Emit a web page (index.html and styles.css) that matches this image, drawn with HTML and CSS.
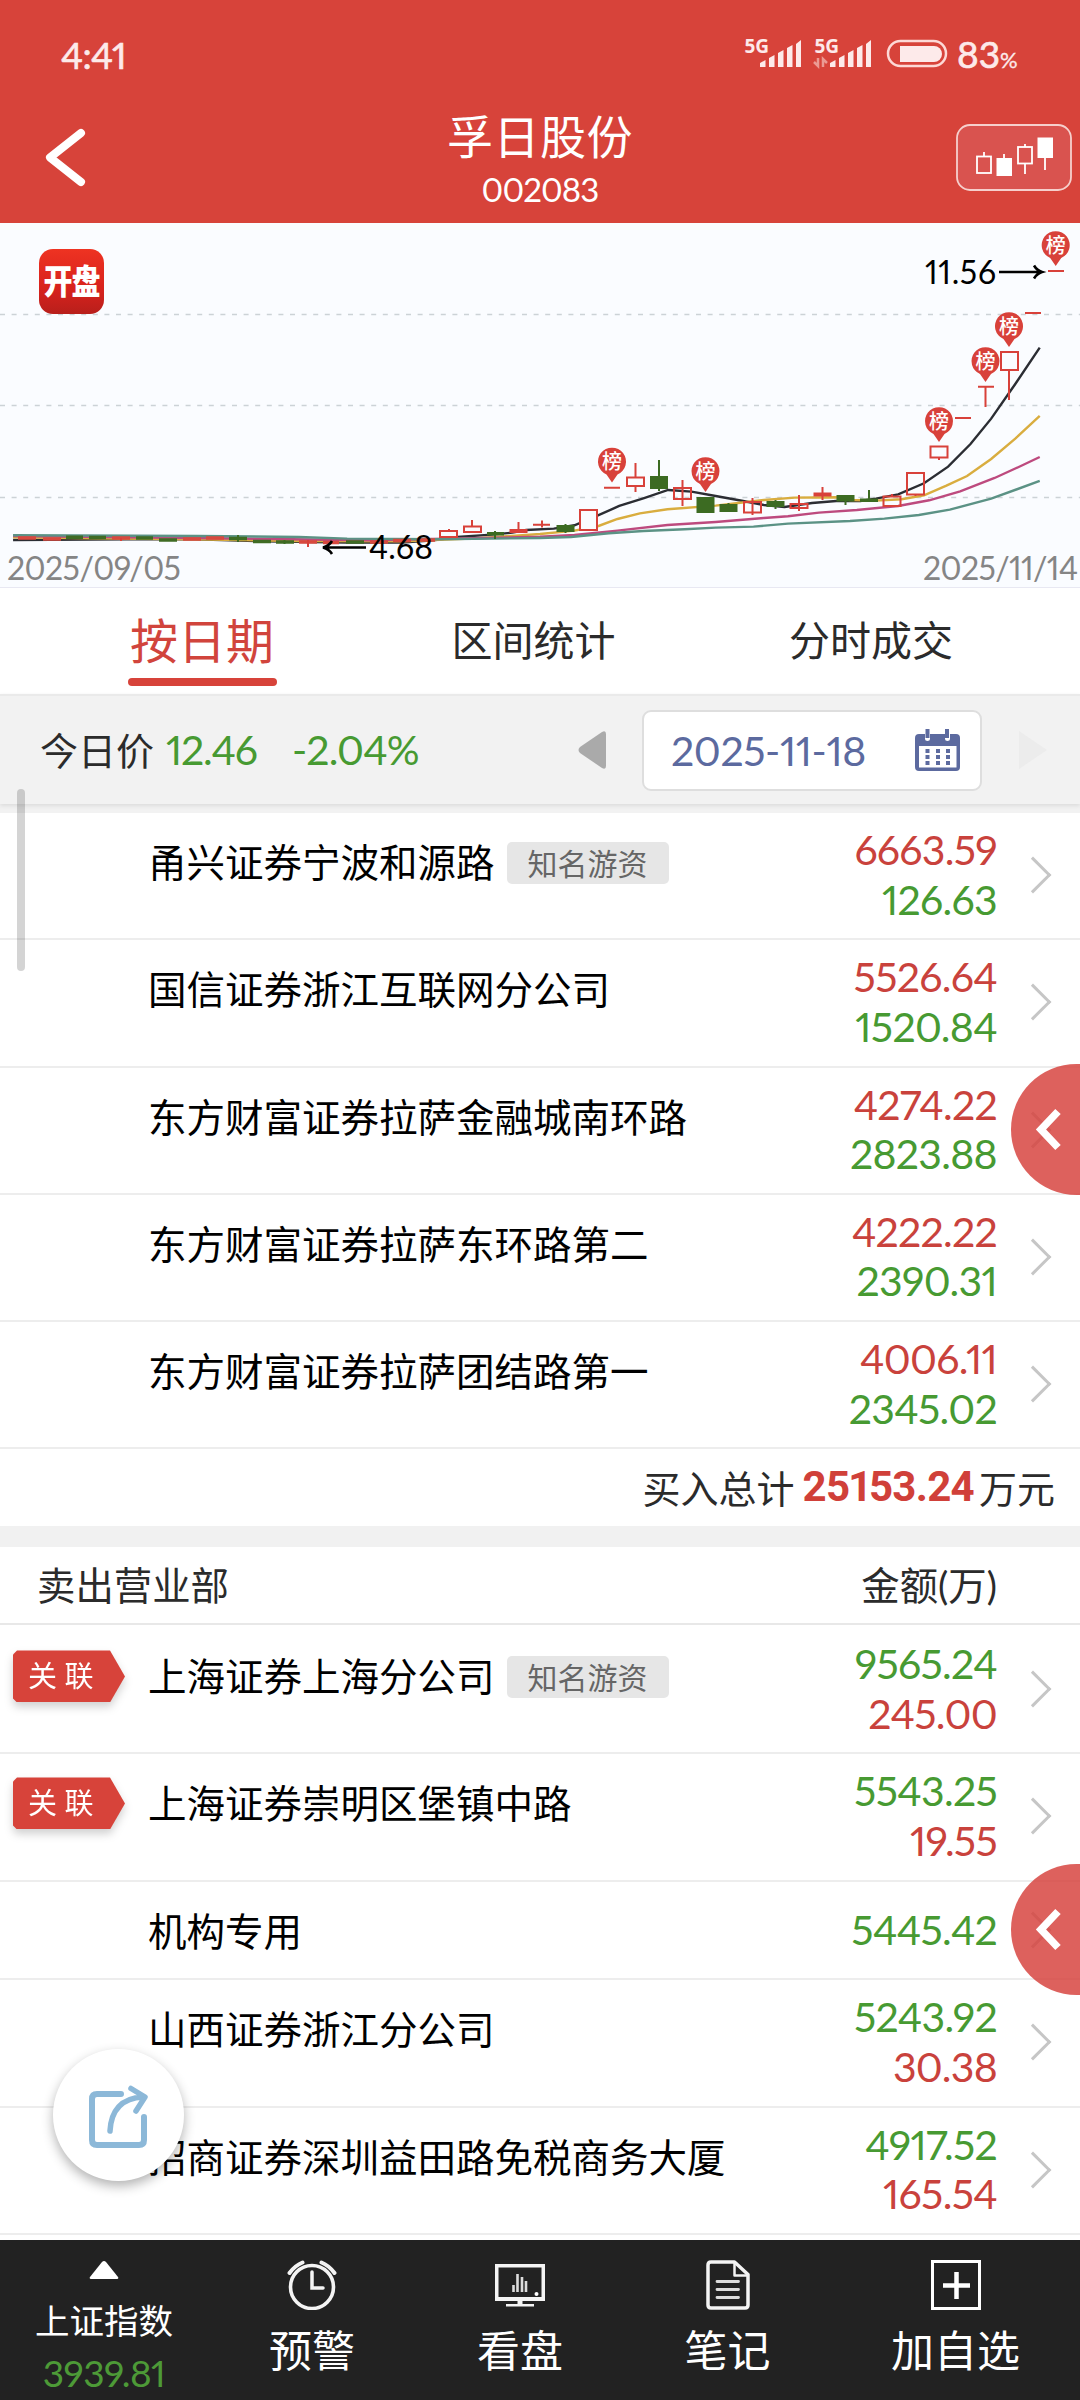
FILE: index.html
```html
<!DOCTYPE html>
<html lang="zh-CN">
<head>
<meta charset="utf-8">
<title>孚日股份 002083</title>
<link rel="stylesheet" href="styles.css">
</head>
<body>
<div class="app">
  <header class="top">
    <div class="status">
      <span class="clock">4:41</span>
      <svg class="signals" width="204" height="42" viewBox="744 32 204 42">
        <g fill="#fdeaea">
          <text class="net" x="744.5" y="52.5">5G</text>
          <path d="M760 67v-4l5.500-3v7zM769 67v-9l5.500-3v12zM778 67v-14l5.500-3v17zM787 67v-19l5.500-3v22zM796 67V44l5-4v27z"/>
          <text class="net" x="814.500" y="52.500">5G</text>
          <path d="M830 67v-4l5.500-3v7zM839 67v-9l5.500-3v12zM848 67v-14l5.500-3v17zM857 67v-19l5.500-3v22zM866 67V44l5-4v27z"/>
          <path d="M900 46h34a8 8 0 0 1 0 16h-34z"/>
        </g>
        <path d="M818 58v8l-4-4M823 67v-8l4 4" fill="none" stroke="#eb9a93" stroke-width="2.500"/>
        <rect x="888" y="41" width="58" height="25" rx="12.500" fill="none" stroke="#fdd9d6" stroke-width="2.500"/>
      </svg>
      <span class="power">83<small>%</small></span>
    </div>
    <div class="titlebar">
      <svg class="back" width="44" height="64" viewBox="44 125 44 64"><path d="M81 133 50 157.500 81 182" fill="none" stroke="#fff" stroke-width="8" stroke-linecap="round" stroke-linejoin="round"/></svg>
      <div class="title"><h1>孚日股份</h1><p>002083</p></div>
      <svg class="kbtn" width="116" height="68" viewBox="956 124 116 68">
        <rect x="957" y="125" width="114" height="65" rx="13" fill="#d9534f" stroke="#f6cfcc" stroke-width="1.800"/>
        <g fill="none" stroke="#fff" stroke-width="1.800">
          <rect x="977" y="156.500" width="14" height="16.500"/><path d="M984 152v4M1004 154v5M1025 144v3M1025 164v10M1045 157v13"/>
          <rect x="1018" y="147" width="14" height="16.500"/>
        </g>
        <path d="M996.500 158H1012v18h-15.500zM1037.500 137.500H1053V158h-15.500z" fill="#fff"/>
      </svg>
    </div>
  </header>

  <section class="chart">
    <svg width="1080" height="364" viewBox="0 223 1080 364">
      <defs>
        <linearGradient id="logo" x1="0" y1="0" x2="0" y2="1"><stop offset="0" stop-color="#ee3322"/><stop offset=".6" stop-color="#d8221d"/><stop offset="1" stop-color="#b81f1b"/></linearGradient>
        <g id="pin"><path d="M0 20.500 -5.500 12.500A14 14 0 1 1 5.500 12.500Z" fill="#d8413a"/><text class="pin-label" x="0" y="7">榜</text></g>
      </defs>
      <path d="M0 314.500H1080M0 405.500H1080M0 497.500H1080" stroke="#ccd2d6" stroke-width="1.300" stroke-dasharray="5 6.600"/>
      <rect x="39" y="249" width="65" height="65" rx="14" fill="url(#logo)"/>
      <text class="logo-label" transform="translate(71.500 294) scale(1 1.180)">开盘</text>
      <g class="averages" transform="translate(540 220) scale(.3444 .3333)">
        <polyline stroke="#2b2d33" points="-1530,960 -1200,958 -1000,958 -800,964 -560,968 -400,968 -310,961 -240,951 -140,944 -80,938 -40,930 40,926 100,916 165,888 230,858 300,835 372,810 440,815 510,828 590,843 650,855 710,861 790,849 860,843 930,843 975,836 1040,823 1115,790 1185,740 1250,672 1310,596 1380,492 1451,383"/>
        <polyline stroke="#d9ad3f" points="-1530,952 -1300,955 -1000,958 -700,963 -400,964 -200,956 0,942 100,932 170,918 225,897 290,880 370,868 510,857 600,846 650,840 740,833 860,832 900,840 975,842 1050,838 1115,826 1180,797 1240,768 1310,717 1380,656 1451,588"/>
        <polyline stroke="#bd4a7e" points="-1530,948 -1000,954 -500,961 -200,955 0,950 100,945 225,932 370,915 510,906 650,894 720,889 810,878 920,870 1040,858 1130,841 1220,814 1320,774 1390,741 1451,711"/>
        <polyline stroke="#5b9285" points="-1530,946 -1000,948 -700,951 -560,956 -300,958 0,954 90,951 200,940 300,933 420,928 510,923 620,920 720,911 900,903 1000,896 1100,885 1190,869 1310,836 1451,783"/>
      </g>
      <g class="bars-left" stroke-width="3.500">
        <path stroke="#d8493f" d="M18 538h18M43 539h18M112 538h18M183 539h18M206 538h18M299 542h18M323 542.500h16M370 542h18M393 540.500h18M417 540h18"/>
        <path stroke="#3f6b24" d="M66 537.300h17M89 537.500h17M136 538h17M159 540h18M229 538.500h18M253 541.500h18M276 542h18M346 542h18"/>
      </g>
      <g stroke="#d8413a" stroke-width="2" fill="#fafcff">
        <path d="M121 538v3M308 540v7M449 529v3M472 520v6M518.500 522v8M542 520.500v7M533 524.700h17M635.500 463v29M682.500 480v26M752.500 498v17M799 495v16M822.500 487v13M892 494v3M915.500 494v2M939 457v3M985.500 387v20M1009 370v30M604 487.700h16M955 418h16M978 386.700h16M1025 313h16M1048 271h16"/>
        <rect x="440" y="531" width="17" height="6"/><rect x="464" y="526.500" width="17" height="5.500"/>
        <rect x="580" y="510" width="17" height="20"/><rect x="627" y="477.500" width="17" height="8.500"/>
        <path fill="none" d="M674 488h17v11h-17zM744 502h17v10.500h-17zM790.500 504h17v4h-17zM883.500 496.500h17v9.500h-17zM907 473h17v21.500h-17z"/>
        <rect x="930.500" y="446.500" width="17" height="11"/><rect x="1001" y="352" width="17" height="18"/>
        <path fill="#d8413a" d="M510.500 530h16v2h-16zM814.500 493.500h16v2h-16z"/>
      </g>
      <g fill="#3c6b22" stroke="#3c6b22" stroke-width="2">
        <path d="M495 531v8M238 535v7M284.500 540v4M565.500 524v9M659 460v31M728.500 503v9M775.500 500v9M845.500 495v10M869 490v12" />
        <path d="M488 533h15v1.500h-15zM557.500 526h16v5h-16zM651 477h16v11h-16zM697.500 498h16v14h-16zM720.500 505h16v6h-16zM767.500 502h16v4h-16zM837.500 496h16v4.500h-16zM861 499.500h16v1.500h-16z"/>
      </g>
      <g fill="none" stroke="#000" stroke-width="2.600"><path d="M366 547.500H326M332 541q-3 5-9 6.500 6 1.500 9 6.500M999 272h40M1034 265.500q3 5 8 6.500-5 1.500-8 6.500"/></g>
      <text class="price" x="369" y="559" textLength="64">4.68</text>
      <text class="price" x="925" y="284" textLength="71">11.56</text>
      <text class="day" x="7" y="580" textLength="174">2025/09/05</text>
      <text class="day" x="923" y="580" textLength="155">2025/11/14</text>
      <use href="#pin" x="612" y="462"/><use href="#pin" x="705.500" y="471.500"/><use href="#pin" x="939" y="421.500"/><use href="#pin" x="985.500" y="361.500"/><use href="#pin" x="1009" y="326.500"/><use href="#pin" x="1055.700" y="245.500"/>
    </svg>
  </section>

  <nav class="tabs">
    <span class="tab active">按日期</span><span class="tab">区间统计</span><span class="tab">分时成交</span>
  </nav>

  <section class="daybar">
    <span class="today">今日价</span><span class="now">12.46</span><span class="change">-2.04%</span>
    <svg class="prev" width="28" height="38"><path d="M28 3v32q0 4-4 2L2 22q-3-3 0-6L24 1q4-2 4 2z" fill="#aaa"/></svg>
    <div class="date"><span>2025-11-18</span>
      <svg width="46" height="43" viewBox="0 0 46 43"><path d="M4 5h6v5q0 2 2.500 2t2.500-2V5h15v5q0 2 2.500 2t2.500-2V5h6q4 0 4 4v29q0 4-4 4H4q-4 0-4-4V9q0-4 4-4zM4 17v21.500h37.500V17z" fill="#5c6a9f" fill-rule="evenodd"/><path d="M10.500 0h4v9h-4zM30 0h4v9h-4zM10.500 20h4v4h-4zM21 20h4v4h-4zM31 20h4v4h-4zM10.500 26h4v4h-4zM21 26h4v4h-4zM31 26h4v4h-4zM10.500 32h4v4h-4zM21 32h4v4h-4zM31 32h4v4h-4z" fill="#5c6a9f"/></svg>
    </div>
    <svg class="next" width="28" height="38"><path d="M0 0v38L28 19z" fill="#ececec"/></svg>
  </section>

  <main>
    <ul class="rows buy">
      <li><span class="name">甬兴证券宁波和源路</span><span class="tag">知名游资</span><span class="vals"><b class="r">6663.59</b><b class="g">126.63</b></span><i class="go"></i></li>
      <li><span class="name">国信证券浙江互联网分公司</span><span class="vals"><b class="r">5526.64</b><b class="g">1520.84</b></span><i class="go"></i></li>
      <li><span class="name">东方财富证券拉萨金融城南环路</span><span class="vals"><b class="r">4274.22</b><b class="g">2823.88</b></span><i class="go"></i></li>
      <li><span class="name">东方财富证券拉萨东环路第二</span><span class="vals"><b class="r">4222.22</b><b class="g">2390.31</b></span><i class="go"></i></li>
      <li><span class="name">东方财富证券拉萨团结路第一</span><span class="vals"><b class="r">4006.11</b><b class="g">2345.02</b></span><i class="go"></i></li>
    </ul>
    <div class="total">买入总计<strong>25153.24</strong>万元</div>
    <div class="sellhead"><span>卖出营业部</span><span>金额(万)</span></div>
    <ul class="rows sell">
      <li><span class="link">关 联</span><span class="name">上海证券上海分公司</span><span class="tag">知名游资</span><span class="vals"><b class="g">9565.24</b><b class="r">245.00</b></span><i class="go"></i></li>
      <li><span class="link">关 联</span><span class="name">上海证券崇明区堡镇中路</span><span class="vals"><b class="g">5543.25</b><b class="r">19.55</b></span><i class="go"></i></li>
      <li class="single"><span class="name">机构专用</span><span class="vals"><b class="g">5445.42</b></span><i class="go"></i></li>
      <li><span class="name">山西证券浙江分公司</span><span class="vals"><b class="g">5243.92</b><b class="r">30.38</b></span><i class="go"></i></li>
      <li><span class="name">招商证券深圳益田路免税商务大厦</span><span class="vals"><b class="g">4917.52</b><b class="r">165.54</b></span><i class="go"></i></li>
    </ul>
  </main>

  <footer class="dock">
    <div class="index"><svg width="30" height="18"><path d="M13 1q2-2 4 0l12 15q1 2-1 2H2q-2 0-1-2z" fill="#fff"/></svg><span>上证指数</span><em>3939.81</em></div>
    <div class="item"><svg width="50" height="50" viewBox="0 0 50 50" fill="none" stroke="#f4f4f4" stroke-width="3"><circle cx="25" cy="27" r="21.500" stroke-width="3.600"/><path d="M25 12v16h11" stroke-width="3.500" stroke-linecap="round"/><path d="M2.500 13Q8 5.500 15.500 2.500M34.500 2.500Q42 5.500 47.500 13" stroke-width="4" stroke-linecap="round"/></svg><span>预警</span></div>
    <div class="item"><svg width="50" height="50" viewBox="0 0 50 50"><path d="M0 4h50v37H0zM3.500 7.500v29.500h43V7.500z" fill="#f4f4f4" fill-rule="evenodd"/><path d="M22.500 41h5v3H39v2.500H11V44h11.500z" fill="#f4f4f4"/><path d="M18.500 25v7M22.500 14v18M27 17v15M31 21v11" stroke="#ddd" stroke-width="2.600"/><circle cx="41.500" cy="34" r="2" fill="#fff"/></svg><span>看盘</span></div>
    <div class="item"><svg width="44" height="50" viewBox="0 0 44 50" fill="none" stroke="#f4f4f4" stroke-width="3.500" stroke-linejoin="round"><path d="M5 2h23.500L42 14.500V45q0 3-3 3H5q-3 0-3-3V5q0-3 3-3z"/><path d="M28.500 2v13.500H42" stroke-width="2.500"/><path d="M11 21.500h21.500M11 29.500h21.500M11 37.500h21.500" stroke="#ddd" stroke-width="2.800" stroke-linecap="round"/></svg><span>笔记</span></div>
    <div class="item"><svg width="50" height="50" viewBox="0 0 50 50" fill="none" stroke="#fff"><rect x="1.500" y="1.500" width="47" height="47" stroke-width="3"/><path d="M12 25.500h27M25.500 12v27" stroke-width="4.500"/></svg><span>加自选</span></div>
  </footer>

  <i class="scroll"></i>
  <div class="drawer one"><svg width="30" height="44"><path d="M24 3.500 7 21.500 24 39.500" fill="none" stroke="#fff" stroke-width="7.500"/></svg></div>
  <div class="drawer two"><svg width="30" height="44"><path d="M24 3.500 7 21.500 24 39.500" fill="none" stroke="#fff" stroke-width="7.500"/></svg></div>
  <div class="share"><svg width="60" height="64" viewBox="0 0 60 64" fill="none" stroke="#8cb8d8" stroke-width="6" stroke-linecap="round" stroke-linejoin="round"><path d="M32 9H8q-5 0-5 5v41q0 5 5 5h42q5 0 5-5V32"/><path d="M21 46C22 26 32 13 54 12M42 3.500 56 12 47 26" stroke-width="5.500"/></svg></div>
</div>
</body>
</html>
```
FILE: styles.css
```css
* { box-sizing: border-box; }
body, h1, p, ul { margin: 0; padding: 0; }
ul { list-style: none; }
body {
  font-family: Lato, "Noto Sans CJK SC", sans-serif;
  font-variant-numeric: proportional-nums;
  background: #fff;
  color: #2b2b2b;
}
i, em { font-style: normal; }
svg { display: block; flex: none; }
.app { position: relative; width: 1080px; height: 2400px; overflow: hidden; }

/* header */
.top { height: 223px; background: #d7433a; color: #fff; }
.status { display: flex; align-items: center; height: 108px; padding-left: 61px; color: #fdeaea; }
.clock { width: 683px; font-size: 37px; letter-spacing: -.7px; -webkit-text-stroke: .6px #fdeaea; }
.signals { margin-top: -2px; }
.net { font: 700 19px "Open Sans", sans-serif; }
.power { margin-left: 9px; margin-top: -2px; font-size: 37px; white-space: nowrap; -webkit-text-stroke: .7px #fdeaea; }
.power small { font-size: 22px; -webkit-text-stroke: .3px #fdeaea; }
.titlebar { display: flex; height: 115px; }
.back { margin: 17px 0 0 44px; }
.title { width: 868px; padding-left: 36px; text-align: center; }
.title h1 { font-size: 46px; font-weight: 400; line-height: 60px; letter-spacing: .5px; margin-top: -1px; white-space: nowrap; }
.title p { font-size: 33px; line-height: 44px; letter-spacing: -.9px; }
.kbtn { margin-top: 16px; }

/* chart */
.chart { height: 365px; background: #fafcff; border-bottom: 1px solid #e8e8f2; }
.averages { fill: none; stroke-width: 2.4; }
.averages polyline { vector-effect: non-scaling-stroke; }
.pin-label { font: 500 20px "Noto Sans CJK SC", sans-serif; fill: #fff; text-anchor: middle; }
.logo-label { font: 900 29px "Noto Sans CJK SC", sans-serif; fill: #fff; text-anchor: middle; letter-spacing: -1px; }
.price { font-size: 32px; fill: #000; }
.day { font-size: 32px; fill: #858585; }

/* tabs */
.tabs { display: grid; grid-template-columns: 332px 331px 344px; padding-left: 36px; height: 106px; justify-items: center; }
.tab { font-size: 41px; line-height: 106px; }
.tab.active { position: relative; width: 149px; font-size: 48px; text-align: center; color: #d1443c; white-space: nowrap; }
.tab.active::after { content: ""; position: absolute; left: 0; right: 0; top: 90px; height: 8px; border-radius: 4px; background: #d7433a; }

/* day selector */
.daybar {
  position: relative; z-index: 1;
  display: flex; align-items: center; height: 110px; padding: 0 0 0 40px;
  background: #f2f2f2; border-top: 2px solid #eaeaea; font-size: 41px;
  box-shadow: 0 2px 4px #dcdcdc;
}
.today { width: 126px; font-size: 38px; margin-top: -3px; }
.now { width: 126px; color: #479a32; letter-spacing: -1.2px; margin-top: -2px; }
.change { width: 286px; color: #479a32; letter-spacing: -.9px; margin-top: -2px; }
.date {
  display: flex; align-items: center; justify-content: space-between;
  width: 340px; height: 81px; margin: 0 37px 0 36px; padding: 0 19px 0 27px;
  background: #fff; border: 2px solid #dedede; border-radius: 9px;
  color: #5c6a9f; letter-spacing: -.4px; white-space: nowrap;
}

/* broker lists */
main { border-top: 9px solid #f2f2f2; }
.rows li { display: flex; height: 127.300px; padding: 12px 0 0 148px; border-bottom: 2px solid #ededed; color: #000; }
.name { font-size: 38.500px; line-height: 75px; white-space: nowrap; }
.tag { width: 162px; height: 42px; margin: 17px 0 0 12px; border-radius: 5px; background: #e6e6e6; color: #666; font-size: 30px; line-height: 42px; text-align: center; }
.vals { margin-left: auto; width: 180px; }
.vals b { display: block; font-size: 41px; font-weight: 400; line-height: 49.500px; text-align: right; letter-spacing: -.7px; }
.r { color: #c9423c; }
.g { color: #479a32; }
.go { width: 26px; height: 26px; margin: 37px 34px 0 23px; border: solid #c6c6c6; border-width: 3px 3px 0 0; transform: rotate(45deg); }
.total { display: flex; align-items: center; justify-content: flex-end; height: 77px; padding: 0 25px 3px 0; font-size: 38px; }
.total strong { margin: 0 5px 0 8px; font-family: Roboto, sans-serif; font-size: 42px; color: #d04039; letter-spacing: -.7px; }
.sellhead { display: flex; align-items: center; justify-content: space-between; height: 99px; padding: 0 83px 4px 37px; border-top: 21px solid #f1f1f1; border-bottom: 2px solid #e8e8e8; font-size: 38.400px; }
.sell li:first-child { height: 129px; padding-top: 14px; }
.sell .single { height: 98.500px; }
.single .vals b { line-height: 71px; }
.single .go { margin-top: 23px; }
.link {
  position: relative; z-index: 0;
  width: 112px; height: 52px; margin: 11px 23px 0 -135px; padding-left: 15px;
  color: #fff; font-size: 29px; line-height: 51px; white-space: nowrap;
  filter: drop-shadow(0 5px 4px rgba(0,0,0,.18));
}
.link::before {
  content: ""; position: absolute; z-index: -1; inset: 0; background: #d7433a;
  clip-path: polygon(4px 0, 97px 0, 112px 50%, 97px 100%, 4px 100%, 0 48px, 0 4px);
}

/* bottom dock */
.dock { position: absolute; left: 0; top: 2240px; width: 1080px; height: 160px; display: grid; grid-template-columns: 208px 208px 208px 207px 249px; background: #222; color: #fff; }
.index, .item { display: flex; flex-direction: column; align-items: center; }
.index { padding-top: 21px; }
.index span { font-size: 34.500px; line-height: 50px; margin-top: 17px; }
.index em { font-size: 37px; line-height: 44px; margin-top: 5px; color: #4d9a37; letter-spacing: -.5px; }
.item { padding-top: 20px; }
.item span { font-size: 43px; line-height: 60px; margin-top: 11px; }

/* overlays */
.scroll { position: absolute; z-index: 2; left: 17px; top: 789px; width: 8px; height: 182px; border-radius: 4px; background: rgba(0,0,0,.17); }
.drawer { position: absolute; left: 1011px; width: 131px; height: 131px; border-radius: 50%; background: rgba(215,67,62,.84); padding: 44px 0 0 23px; }
.one { top: 1064px; }
.two { top: 1864px; }
.share { position: absolute; left: 53px; top: 2049px; width: 131px; height: 132px; border-radius: 50%; background: #fff; padding: 36px 0 0 36px; box-shadow: 0 5px 12px rgba(0,0,0,.3); }
```
